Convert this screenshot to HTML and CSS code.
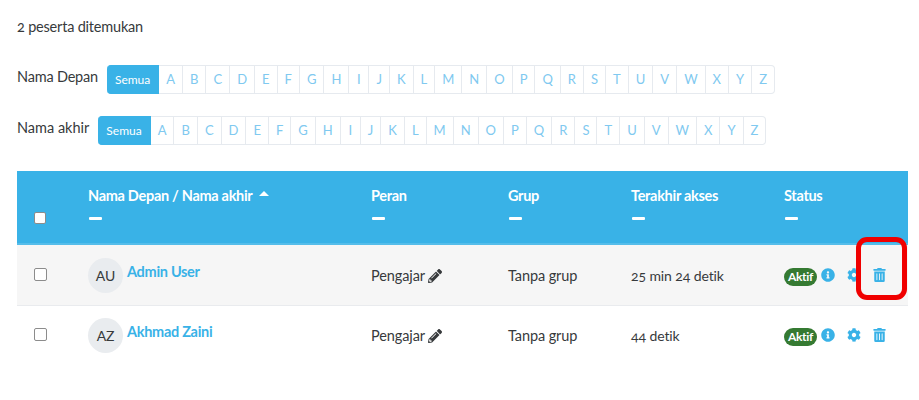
FILE: index.html
```html
<!DOCTYPE html>
<html lang="en">
<head>
    <meta charset="UTF-8">
    <title>Peserta</title>
    <link rel="stylesheet" href="styles.css">
</head>
<body>
    <svg class="icon-defs" width="0" height="0">
        <symbol id="i-pencil" viewBox="0 0 512 512"><path d="M497.9 142.1l-46.1 46.1c-4.7 4.7-12.3 4.7-17 0l-111-111c-4.7-4.7-4.7-12.3 0-17l46.1-46.1c18.7-18.7 49.1-18.7 67.9 0l60.1 60.1c18.8 18.7 18.8 49.1 0 67.9zM284.2 99.8L21.6 362.4.4 483.9c-2.9 16.4 11.4 30.6 27.8 27.8l121.5-21.3 262.6-262.6c4.7-4.7 4.7-12.3 0-17l-111-111c-4.8-4.7-12.4-4.7-17.1 0zM124.1 339.9c-5.5-5.5-5.5-14.3 0-19.8l154-154c5.5-5.5 14.3-5.5 19.8 0s5.5 14.3 0 19.8l-154 154c-5.5 5.5-14.3 5.5-19.8 0zM88 424h48v36.3l-64.5 11.3-31.1-31.1L51.7 376H88v48z"/></symbol>
        <symbol id="i-info" viewBox="0 0 512 512"><path d="M256 8C119.043 8 8 119.083 8 256c0 136.997 111.043 248 248 248s248-111.003 248-248C504 119.083 392.957 8 256 8zm0 110c23.196 0 42 18.804 42 42s-18.804 42-42 42-42-18.804-42-42 18.804-42 42-42zm56 254c0 6.627-5.373 12-12 12h-88c-6.627 0-12-5.373-12-12v-24c0-6.627 5.373-12 12-12h12v-64h-12c-6.627 0-12-5.373-12-12v-24c0-6.627 5.373-12 12-12h64c6.627 0 12 5.373 12 12v100h12c6.627 0 12 5.373 12 12v24z"/></symbol>
        <symbol id="i-cog" viewBox="0 0 512 512"><path d="M487.4 315.7l-42.6-24.6c4.3-23.2 4.3-47 0-70.2l42.6-24.6c4.9-2.8 7.1-8.6 5.5-14-11.1-35.6-30-67.8-54.7-94.6-3.8-4.1-10-5.1-14.8-2.3L380.8 110c-17.9-15.4-38.5-27.3-60.8-35.1V25.8c0-5.6-3.9-10.5-9.4-11.7-36.7-8.2-74.3-7.8-109.2 0-5.5 1.2-9.4 6.1-9.4 11.7V75c-22.2 7.9-42.8 19.8-60.8 35.1L88.7 85.5c-4.9-2.8-11-1.9-14.8 2.3-24.7 26.7-43.6 58.9-54.7 94.6-1.7 5.4.6 11.2 5.5 14L67.3 221c-4.3 23.2-4.3 47 0 70.2l-42.6 24.6c-4.9 2.8-7.1 8.6-5.5 14 11.1 35.6 30 67.8 54.7 94.6 3.8 4.1 10 5.1 14.8 2.3l42.6-24.6c17.9 15.4 38.5 27.3 60.8 35.1v49.2c0 5.6 3.9 10.5 9.4 11.7 36.7 8.2 74.3 7.8 109.2 0 5.5-1.2 9.4-6.1 9.4-11.7v-49.2c22.2-7.9 42.8-19.8 60.8-35.1l42.6 24.6c4.9 2.8 11 1.9 14.8-2.3 24.7-26.7 43.6-58.9 54.7-94.6 1.5-5.5-.7-11.3-5.6-14.1zM256 336c-44.1 0-80-35.9-80-80s35.9-80 80-80 80 35.9 80 80-35.9 80-80 80z"/></symbol>
        <symbol id="i-trash" viewBox="0 0 448 512"><path d="M32 464a48 48 0 0 0 48 48h288a48 48 0 0 0 48-48V128H32zm272-256a16 16 0 0 1 32 0v224a16 16 0 0 1-32 0zm-96 0a16 16 0 0 1 32 0v224a16 16 0 0 1-32 0zm-96 0a16 16 0 0 1 32 0v224a16 16 0 0 1-32 0zM432 32H312l-9.4-18.7A24 24 0 0 0 281.1 0H166.8a23.72 23.72 0 0 0-21.4 13.3L136 32H16A16 16 0 0 0 0 48v32a16 16 0 0 0 16 16h416a16 16 0 0 0 16-16V48a16 16 0 0 0-16-16z"/></symbol>
    </svg>

    <p class="found">2 peserta ditemukan</p>

    <div class="filter">
        <span class="filter-label">Nama Depan</span>
        <ul class="letters">
            <li class="active">Semua</li>
            <li>A</li><li>B</li><li>C</li><li>D</li><li>E</li><li>F</li><li>G</li><li>H</li><li>I</li><li>J</li><li>K</li><li>L</li><li>M</li>
            <li>N</li><li>O</li><li>P</li><li>Q</li><li>R</li><li>S</li><li>T</li><li>U</li><li>V</li><li>W</li><li>X</li><li>Y</li><li>Z</li>
        </ul>
    </div>
    <div class="filter">
        <span class="filter-label filter-label-short">Nama akhir</span>
        <ul class="letters">
            <li class="active">Semua</li>
            <li>A</li><li>B</li><li>C</li><li>D</li><li>E</li><li>F</li><li>G</li><li>H</li><li>I</li><li>J</li><li>K</li><li>L</li><li>M</li>
            <li>N</li><li>O</li><li>P</li><li>Q</li><li>R</li><li>S</li><li>T</li><li>U</li><li>V</li><li>W</li><li>X</li><li>Y</li><li>Z</li>
        </ul>
    </div>

    <table class="participants">
        <colgroup>
            <col class="col-check"><col class="col-name"><col class="col-role"><col class="col-group"><col class="col-access"><col class="col-status">
        </colgroup>
        <thead>
            <tr>
                <th class="check-cell"><span class="fake-check"></span></th>
                <th>Nama Depan / Nama akhir <span class="sort-up"></span><span class="dash"></span></th>
                <th>Peran<span class="dash"></span></th>
                <th>Grup<span class="dash"></span></th>
                <th>Terakhir akses<span class="dash"></span></th>
                <th>Status<span class="dash"></span></th>
            </tr>
        </thead>
        <tbody>
            <tr class="row-even">
                <td class="check-cell"><span class="fake-check"></span></td>
                <td><div class="user"><span class="avatar">AU</span><a class="user-link">Admin User</a></div></td>
                <td>Pengajar <svg class="pencil"><use href="#i-pencil"/></svg></td>
                <td>Tanpa grup</td>
                <td class="nums">25 min 24 detik</td>
                <td>
                    <div class="status">
                        <span class="badge">Aktif</span>
                        <svg class="act act-info"><use href="#i-info"/></svg>
                        <svg class="act act-cog"><use href="#i-cog"/></svg>
                        <svg class="act act-trash"><use href="#i-trash"/></svg>
                    </div>
                </td>
            </tr>
            <tr>
                <td class="check-cell"><span class="fake-check"></span></td>
                <td><div class="user"><span class="avatar">AZ</span><a class="user-link">Akhmad Zaini</a></div></td>
                <td>Pengajar <svg class="pencil"><use href="#i-pencil"/></svg></td>
                <td>Tanpa grup</td>
                <td class="nums">44 detik</td>
                <td>
                    <div class="status">
                        <span class="badge">Aktif</span>
                        <svg class="act act-info"><use href="#i-info"/></svg>
                        <svg class="act act-cog"><use href="#i-cog"/></svg>
                        <svg class="act act-trash"><use href="#i-trash"/></svg>
                    </div>
                </td>
            </tr>
        </tbody>
    </table>

    <div class="highlight"></div>
</body>
</html>
```

FILE: styles.css
```css
body {
    font-family: Lato, "Open Sans", sans-serif;
    font-size: 14.5px;
    font-variant-numeric: oldstyle-nums;
    color: #373a3c;
    background-color: #ffffff;
    margin: 0;
    padding: 18px 11px 0 17px;
    position: relative;
}
.icon-defs {
    position: absolute;
}
.found {
    margin: 0 0 29px;
    line-height: 18px;
    letter-spacing: -0.2px;
}
.filter {
    display: flex;
    align-items: flex-start;
    gap: 9px;
    margin-bottom: 22px;
}
.filter-label {
    margin-top: 3px;
    line-height: 18px;
    letter-spacing: -0.2px;
}
.filter-label-short {
    letter-spacing: 0;
}
.letters {
    display: flex;
    list-style: none;
    margin: 0;
    padding: 0;
    height: 29px;
    font-size: 13px;
    line-height: 27px;
    color: #80c9f0;
}
.letters li {
    border: 1px solid #e6eaef;
    border-left-width: 0;
    padding: 0 7px;
    box-sizing: border-box;
    min-width: 20px;
    text-align: center;
}
.letters li:last-child {
    border-radius: 0 4px 4px 0;
}
.letters .active {
    background-color: #39b2e7;
    border-color: #39b2e7;
    border-radius: 4px 0 0 4px;
    color: #ffffff;
    padding: 0 8px;
    font-size: 12px;
}
.participants {
    width: 891px;
    margin-top: 26px;
    table-layout: fixed;
    border-collapse: collapse;
}
.col-check { width: 71px; }
.col-name { width: 283px; }
.col-role { width: 137px; }
.col-group { width: 123px; }
.col-access { width: 153px; }
.col-status { width: 124px; }
.participants thead tr {
    height: 73px;
    background-color: #39b2e7;
    border-bottom: 2px solid #55bdea;
    color: #ffffff;
}
.participants th {
    text-align: left;
    font-weight: 700;
    letter-spacing: -0.3px;
    padding: 16px 0 0;
    vertical-align: top;
    line-height: 18px;
}
.participants td {
    padding: 0;
    height: 60px;
    border-bottom: 1px solid #e9ebee;
    vertical-align: middle;
    letter-spacing: -0.1px;
}
.participants tbody tr:last-child td {
    height: 58px;
    border-bottom: 0;
}
.participants .nums {
    font-size: 14px;
}
.row-even {
    background-color: #f6f6f6;
}
.participants .check-cell {
    padding-left: 17px;
}
.participants th.check-cell {
    vertical-align: bottom;
    padding-bottom: 17px;
}
.fake-check {
    display: block;
    box-sizing: border-box;
    width: 13px;
    height: 13px;
    margin-bottom: 2px;
    border: 1px solid #8c8c8c;
    border-radius: 2px;
    background-color: #ffffff;
}
th .fake-check {
    width: 12px;
    height: 12px;
}
.dash {
    display: block;
    width: 13px;
    height: 3px;
    margin: 12px 0 0 1px;
    border-radius: 1px;
    background-color: #ffffff;
}
.sort-up {
    display: inline-block;
    width: 0;
    height: 0;
    margin: 0 0 8px 4px;
    vertical-align: middle;
    border-left: 5px solid transparent;
    border-right: 5px solid transparent;
    border-bottom: 5px solid #ffffff;
}
.user {
    display: flex;
    align-items: flex-start;
}
.avatar {
    display: flex;
    align-items: center;
    justify-content: center;
    width: 35px;
    height: 35px;
    margin-right: 4px;
    border-radius: 50%;
    background-color: #e9ecef;
    font-size: 14px;
}
.user-link {
    margin-top: 5px;
    color: #39b2e7;
    font-weight: 700;
    letter-spacing: -0.3px;
    line-height: 18px;
}
.pencil {
    width: 14px;
    height: 14px;
    vertical-align: -2px;
    fill: #373a3c;
}
.status {
    display: flex;
    align-items: center;
}
.badge {
    width: 33px;
    height: 18px;
    margin-top: 3px;
    border-radius: 9px;
    background-color: #357a32;
    color: #ffffff;
    font-size: 12px;
    font-weight: 700;
    line-height: 18px;
    text-align: center;
    letter-spacing: -0.3px;
}
.act {
    width: 14px;
    height: 14px;
    fill: #39b2e7;
}
.act-info {
    margin: -1px 0 0 4px;
}
.act-cog {
    margin-left: 12px;
}
.act-trash {
    width: 13px;
    margin-left: 12px;
}
.highlight {
    position: absolute;
    left: 856px;
    top: 237px;
    width: 51px;
    height: 63px;
    box-sizing: border-box;
    border: 5px solid #f00000;
    border-radius: 11px;
}
```
